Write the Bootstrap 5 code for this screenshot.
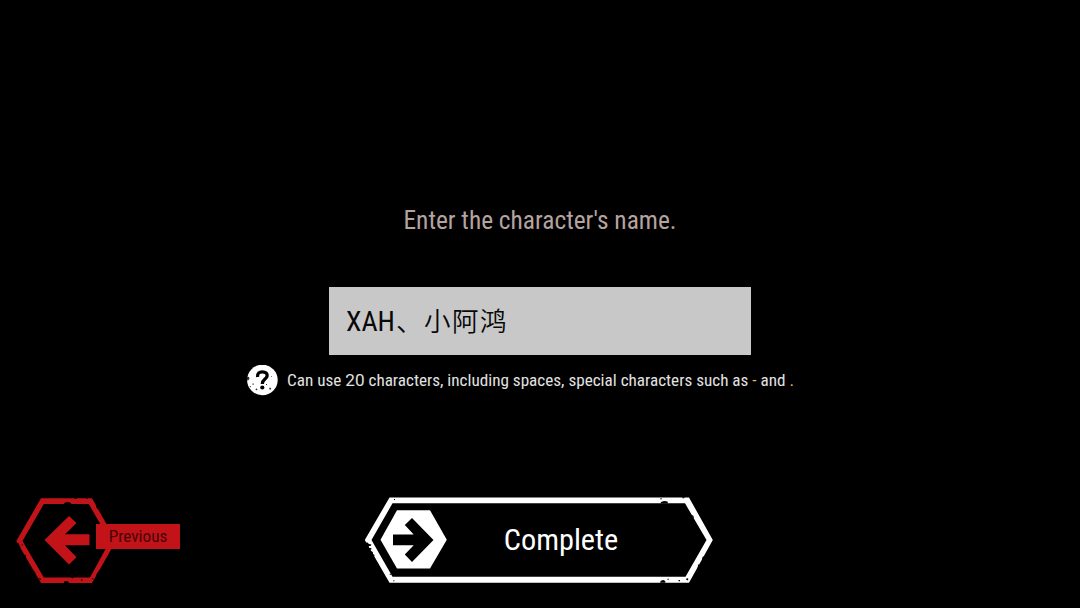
<!DOCTYPE html>
<html lang="en">
<head>
<meta charset="utf-8">
<meta name="viewport" content="width=device-width, initial-scale=1">
<title>Character name</title>
<link href="https://cdn.jsdelivr.net/npm/bootstrap@5.3.0/dist/css/bootstrap.min.css" rel="stylesheet">
<style>
body{background:#000;font-family:"Roboto Condensed",Roboto,"Noto Sans CJK SC",sans-serif;}
.screen{height:608px;padding-top:201px}
.prompt{font-size:25.4px;line-height:38px;color:#b5a3a0}
.name-field{width:422px;height:67.5px;margin-top:48px;padding:0 17px 0;background:#c8c8c8;color:#080808;font-size:28px;line-height:69px;outline:0}
.han{font-family:"Noto Sans CJK SC",sans-serif;font-weight:350;font-size:26.5px;letter-spacing:1.5px;line-height:1;margin-left:1px}
.hint{height:32px;margin-top:9.5px;padding-left:247px;gap:9px;font-size:17.15px;color:#e2e2e2}
.hint-text{padding-top:2px}
.wide{font-family:Roboto,sans-serif}
.ok-char{color:#f0b95a}
.actions{margin-top:100px;height:88px}
.btn-prev{width:166px;margin-left:15px;color:#c11318}
.prev-label{background:#c11318;color:#480307;width:84px;height:25.5px;left:81px;top:27.5px;font-size:17.2px;line-height:25px}
.btn-done{width:350px;margin-left:183px}
.done-label{font-size:30.3px;padding:0 0 0 44px}
.frame{left:0;top:0}
</style>
</head>
<body>
<main class="screen d-flex flex-column overflow-hidden">
  <div class="prompt text-center" id="prompt">Enter the character's name.</div>
  <div class="name-field mx-auto text-nowrap overflow-hidden" role="textbox" contenteditable="true" spellcheck="false" aria-labelledby="prompt">XAH<span class="han" lang="zh-Hans">、小阿鸿</span></div>
  <div class="hint d-flex align-items-center">
    <svg width="31" height="31" viewBox="247 365 31 31">
      <circle cx="262.4" cy="380" r="15.3" fill="#fff"/>
      <path d="M257.600 377C257.200 373 259.500 371.800 262.300 371.800C265.800 371.800 267.500 373.600 267.100 376C266.700 379.200 262.300 379.300 262.300 384" fill="none" stroke="#000" stroke-width="3.300"/>
      <circle cx="262.300" cy="387.500" r="2.100"/>
      <path d="M247 376.500l2 .5.500 2-1.500 1.500-1-.500zM252.500 383.500h1.200v1.200h-1.200zM256 388.500l1.500.5-.5 1.200-1.500-.2zM269.500 387.500l1.800.8-.8 1.400-1.300-.5zM266 384h1v1h-1zM271 376h.8v.8h-.8zM250 386l1 .3-.3 1-1-.3z" fill="#333"/>
    </svg>
    <span class="hint-text text-nowrap">Can use <span class="wide">20</span> characters, including spaces, special characters such as <span class="ok-char">-</span> and <span class="ok-char">.</span></span>
  </div>
  <div class="actions d-flex">
    <button class="btn-prev btn p-0 border-0 rounded-0 position-relative" type="button">
      <svg class="frame position-absolute" width="104" height="88" viewBox="15 496 104 88">
        <path fill="currentColor" fill-rule="evenodd" d="M41 498.300H92L116 541L92 583H41L16.300 541ZM43.800 504H88.800L110 541L90 577.500H43.800L22.500 541Z"/>
        <path fill="currentColor" d="M44.500 540L69 516L76.500 523L65 534.200H89.500V545.200H65L76.500 557.300L69 564.500Z"/>
        <path d="M64 504.500l.5-1.800 3-.8 3 .8 1.500 2zM74 498h3l-1 1h-1zM86 498h2l-.5 1zM96 505l2.500 3-.5 1.500-2-2.500zM15 543l3 0 1.500 1-.500 1.500 1.500 1-.5 1.500-5-2zM22.800 544l-1.300.5 1 1.500zM25 554l1 2-.3 2 1.500 2 1 3-.5 2-4-4zM34 571l1.500 1.500-.5 1.500zM39 578l2 1-.5 1-1.500-1zM63.500 583.500l.8-2 2-.5 2 .5.800 2zM71 577h2.500l-1 1.500zM81 579.500h1.500v1h-1.500zM92 578l1.500.5-.5 1-1-.5zM97.500 576l-1.500-1 2-3 3-3z"/>
      </svg>
      <span class="prev-label position-absolute text-center">Previous</span>
    </button>
    <button class="btn-done btn p-0 border-0 rounded-0 position-relative text-white d-flex align-items-center justify-content-center" type="button">
      <svg class="frame position-absolute" width="350" height="88" viewBox="364 496 350 88">
        <path fill="#fff" fill-rule="evenodd" d="M389.500 497.500H689L712.800 540L689 582.700H389.500L364.800 540ZM392.500 503.300H685L706.500 540L685.500 576.700H392.500L371.500 540Z"/>
        <path fill="#fff" d="M380.500 539.800L397 510.300H430L446.800 539.800L430 568.600H397Z"/>
        <path d="M433.500 540L412 518L404.800 525L413.700 534.500H393V545.200H413.700L404.800 554.500L412 562Z"/>
        <path d="M364 543l3.500-.5 1.500 1.500 2.500.5-1 1.500-2 0 .5 2 2.500 0-.5 2-5-2zM371 551l1.800 1 .2 2 1.500 1-.5 2-3-4zM377 562.500l1.500 2 1 3-2.500-2.500zM390 573.500l1 .5-.5 1-1-.5zM394 499h1v1h-1zM393 580.500h1.500v.8H393zM660.500 503.500l.5-1.500 3-1 3.500.5.500 2zM660 498.500h2v.8h-2zM682 497.300h3l-1 1h-1.500zM692 515l1.500 1 .5 3-2-3zM704.500 556l-2 1-.5 3 1 1zM699 564l-1 1-.3 3 1.500 0zM660 582.800l.8-2 2.500-.8 2 1 0 1.800zM667.500 578.800h1.300v1h-1.300zM678.500 580h1.500v1.200h-1.500zM687 578l1.500 1-1 1.500-1.500-1z"/>
      </svg>
      <span class="done-label">Complete</span>
    </button>
  </div>
</main>
</body>
</html>
